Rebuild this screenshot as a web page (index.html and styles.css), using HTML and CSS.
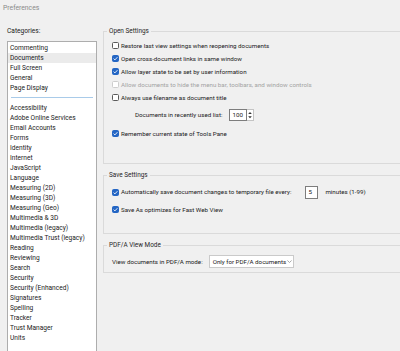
FILE: index.html
```html
<!DOCTYPE html>
<html lang="en">
<head>
    <meta charset="UTF-8">
    <meta name="viewport" content="width=device-width, initial-scale=1.0">
    <title>Preferences</title>
    <link rel="stylesheet" href="styles.css">
</head>
<body>
    <div class="window">
        <div class="title">Preferences</div>
        <div class="main">
            <div class="categories">
                <div class="cat-label">Categories:</div>
                <ul class="cat-list">
                    <li>Commenting</li>
                    <li class="selected">Documents</li>
                    <li>Full Screen</li>
                    <li>General</li>
                    <li>Page Display</li>
                    <li class="sep"></li>
                    <li>Accessibility</li>
                    <li>Adobe Online Services</li>
                    <li>Email Accounts</li>
                    <li>Forms</li>
                    <li>Identity</li>
                    <li>Internet</li>
                    <li>JavaScript</li>
                    <li>Language</li>
                    <li>Measuring (2D)</li>
                    <li>Measuring (3D)</li>
                    <li>Measuring (Geo)</li>
                    <li>Multimedia &amp; 3D</li>
                    <li>Multimedia (legacy)</li>
                    <li>Multimedia Trust (legacy)</li>
                    <li>Reading</li>
                    <li>Reviewing</li>
                    <li>Search</li>
                    <li>Security</li>
                    <li>Security (Enhanced)</li>
                    <li>Signatures</li>
                    <li>Spelling</li>
                    <li>Tracker</li>
                    <li>Trust Manager</li>
                    <li>Units</li>
                </ul>
            </div>

            <div class="settings">
                <fieldset class="group group-open">
                    <legend>Open Settings</legend>
                    <div class="row"><span class="box"></span>Restore last view settings when reopening documents</div>
                    <div class="row"><span class="box checked"><svg viewBox="0 0 7 7"><polyline points="1.6,3.6 2.9,4.9 5.4,2.2" /></svg></span>Open cross-document links in same window</div>
                    <div class="row"><span class="box checked"><svg viewBox="0 0 7 7"><polyline points="1.6,3.6 2.9,4.9 5.4,2.2" /></svg></span>Allow layer state to be set by user information</div>
                    <div class="row disabled"><span class="box"></span>Allow documents to hide the menu bar, toolbars, and window controls</div>
                    <div class="row"><span class="box"></span>Always use filename as document title</div>
                    <div class="row recent">
                        <span class="recent-label">Documents in recently used list:</span>
                        <span class="num">100</span>
                        <span class="spin">
                            <svg viewBox="0 0 6 10"><polygon points="1.2,4 3,2 4.8,4" /><polygon points="1.2,6.3 3,8.3 4.8,6.3" /></svg>
                        </span>
                    </div>
                    <div class="row remember"><span class="box checked"><svg viewBox="0 0 7 7"><polyline points="1.6,3.6 2.9,4.9 5.4,2.2" /></svg></span>Remember current state of Tools Pane</div>
                </fieldset>

                <fieldset class="group group-save">
                    <legend>Save Settings</legend>
                    <div class="row autosave">
                        <span class="box checked"><svg viewBox="0 0 7 7"><polyline points="1.6,3.6 2.9,4.9 5.4,2.2" /></svg></span>Automatically save document changes to temporary file every:
                        <span class="num minutes">5</span>
                        <span class="unit">minutes (1-99)</span>
                    </div>
                    <div class="row fastweb"><span class="box checked"><svg viewBox="0 0 7 7"><polyline points="1.6,3.6 2.9,4.9 5.4,2.2" /></svg></span>Save As optimizes for Fast Web View</div>
                </fieldset>

                <fieldset class="group group-pdfa">
                    <legend>PDF/A View Mode</legend>
                    <div class="row">
                        <span>View documents in PDF/A mode:</span>
                        <span class="select">
                            <span>Only for PDF/A documents</span>
                            <svg viewBox="0 0 8 6"><polyline points="1.5,1.8 4,4.2 6.5,1.8" /></svg>
                        </span>
                    </div>
                </fieldset>
            </div>
        </div>
    </div>
</body>
</html>
```

FILE: styles.css
```css
body {
    margin: 0;
    width: 400px;
    height: 351px;
    overflow: hidden;
    background-color: #f0f0f0;
    font-family: Roboto, "Noto Sans", sans-serif;
    font-size: 6.2px;
    color: #1a1a1a;
}

.title {
    height: 20px;
    line-height: 16px;
    padding-left: 3px;
    font-size: 6.8px;
    color: #8a8a8a;
}

.main {
    display: flex;
    gap: 6px;
    padding-left: 7px;
}

/* left column */
.categories {
    flex: none;
    width: 90px;
    padding-top: 6px;
}

.cat-label {
    line-height: 10px;
    margin-bottom: 5px;
    font-size: 6.6px;
}

.cat-list {
    list-style: none;
    margin: 0;
    padding: 1px 0 0;
    height: 320px;
    background-color: #fff;
    border: 1px solid #adadad;
    font-size: 6.6px;
}

.cat-list li {
    height: 10px;
    line-height: 10px;
    padding-left: 2px;
    white-space: nowrap;
}

.cat-list li.selected {
    background-color: #ebebeb;
}

.cat-list li.sep {
    height: 0;
    margin: 4px 3px 5px;
    border-top: 1px solid #a9cbe9;
}

/* right column */
.settings {
    flex: none;
    width: 310px;
    padding-top: 6px;
    display: flex;
    flex-direction: column;
    gap: 6px;
}

.group {
    margin: 0;
    min-width: 0;
    border: 1px solid #dadada;
    padding: 3px 0 0 8px;
}

.group legend {
    line-height: 10px;
    padding: 0 2px;
    margin-left: -5px;
    color: #262626;
    font-size: 6.4px;
}

.group-open {
    padding-bottom: 23px;
}

.group-save {
    padding-top: 5px;
    padding-bottom: 17px;
}

.group-pdfa {
    padding-top: 5px;
    padding-bottom: 4px;
}

.row {
    display: flex;
    align-items: center;
    height: 13px;
    white-space: nowrap;
}

.row.disabled {
    color: #a3a3a3;
}

.box {
    flex: none;
    box-sizing: border-box;
    width: 7px;
    height: 7px;
    margin-right: 2px;
    border: 1px solid #5a5a5a;
    border-radius: 1.5px;
    background-color: #fff;
}

.row.disabled .box {
    border-color: #cdcdcd;
}

.box.checked {
    border-color: #2466c4;
    background-color: #2466c4;
}

.box svg {
    display: block;
    width: 7px;
    height: 7px;
    margin: -1px;
}

.box svg polyline {
    fill: none;
    stroke: #fff;
    stroke-width: 0.9;
}

.recent {
    padding-left: 23px;
    margin-top: 4px;
}

.num {
    box-sizing: border-box;
    height: 12px;
    line-height: 10px;
    padding-left: 2px;
    background-color: #fff;
    border: 1px solid #7d7d7d;
}

.recent .num {
    width: 18px;
    margin-left: 7px;
}

.spin {
    box-sizing: border-box;
    width: 7px;
    height: 12px;
    background-color: #fff;
    border: 1px solid #c4c4c4;
    border-left: none;
}

.spin svg {
    display: block;
    width: 6px;
    height: 10px;
}

.spin polygon {
    fill: #333;
}

.remember {
    margin-top: 6px;
}

.autosave {
    height: 14px;
}

.num.minutes {
    width: 13px;
    height: 13px;
    margin-left: 14px;
}

.unit {
    margin-left: 7px;
}

.fastweb {
    margin-top: 4px;
}

.select {
    box-sizing: border-box;
    display: flex;
    align-items: center;
    justify-content: space-between;
    width: 85px;
    height: 13px;
    margin-left: 6px;
    padding: 0 3px 0 3px;
    background-color: #fff;
    border: 1px solid #cacaca;
}

.select svg {
    flex: none;
    width: 7px;
    height: 5px;
}

.select polyline {
    fill: none;
    stroke: #8a8a8a;
    stroke-width: 0.9;
}
```
